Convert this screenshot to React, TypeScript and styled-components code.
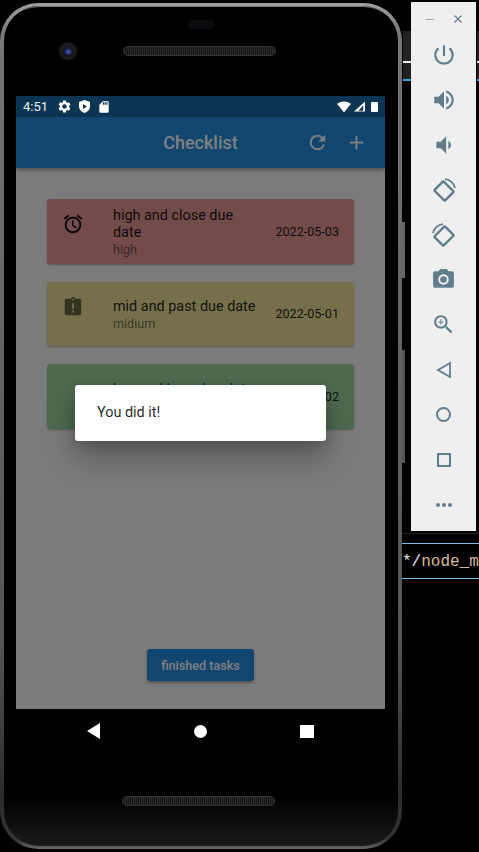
import React from "react";
import styled, { createGlobalStyle } from "styled-components";
import {
  MdAccessAlarm,
  MdAdd,
  MdAssignmentLate,
  MdMoreHoriz,
  MdPhotoCamera,
  MdPowerSettingsNew,
  MdRefresh,
  MdSdCard,
  MdSettings,
  MdVolumeDown,
  MdVolumeUp,
  MdZoomIn,
} from "react-icons/md";

const RotateIcon: React.FC<{ flip?: boolean }> = ({ flip }) => (
  <svg width="26" height="26" viewBox="0 0 26 26" fill="none" stroke="#607d8b">
    <g transform={flip ? "translate(26 0) scale(-1 1)" : undefined}>
      <rect
        x="6.5"
        y="6.5"
        width="13"
        height="15"
        rx="1"
        strokeWidth="2.4"
        transform="rotate(-45 13 14)"
      />
      <path d="M14 2.2 A11 11 0 0 1 24 11" strokeWidth="1.8" />
    </g>
  </svg>
);

const App: React.FC = () => {
  return (
    <>
      <GlobalStyle />
      <Desktop>
        <Phone>
          <PhoneInner>
            <TopBezel>
              <SensorPill />
              <EarRow>
                <Camera />
                <Speaker />
              </EarRow>
            </TopBezel>
            <Screen>
              <StatusBar>
                <StatusGroup>
                  <Clock>4:51</Clock>
                  <MdSettings size={15} color="#fff" />
                  <ShieldIcon />
                  <MdSdCard size={14} color="#fff" />
                </StatusGroup>
                <StatusGroup $tight>
                  <svg width="14" height="12" viewBox="0 0 15 12">
                    <path d="M0 2.5 Q7.5 -2.5 15 2.5 L7.5 12 Z" fill="#fff" />
                  </svg>
                  <svg width="11" height="11" viewBox="0 0 12 11">
                    <path d="M12 0 V11 H0 Z" fill="#fff" />
                    <path d="M10 4 V10 H5 Z" fill="#0c3553" />
                  </svg>
                  <Battery />
                </StatusGroup>
              </StatusBar>
              <AppSurface>
                <AppBar>
                  <AppTitle>Checklist</AppTitle>
                  <AppActions>
                    <MdRefresh size={23} color="#fff" />
                    <MdAdd size={23} color="#fff" />
                  </AppActions>
                </AppBar>
                <Body>
                  <TaskList>
                    <TaskCard $tone="#e69696">
                      <TaskIcon>
                        <MdAccessAlarm size={22} />
                      </TaskIcon>
                      <TaskText>
                        <TaskTitle>high and close due date</TaskTitle>
                        <TaskPriority>high</TaskPriority>
                      </TaskText>
                      <TaskDate>2022-05-03</TaskDate>
                    </TaskCard>
                    <TaskCard $tone="#eae096">
                      <TaskIcon $muted>
                        <MdAssignmentLate size={22} />
                      </TaskIcon>
                      <TaskText>
                        <TaskTitle>mid and past due date</TaskTitle>
                        <TaskPriority>midium</TaskPriority>
                      </TaskText>
                      <TaskDate>2022-05-01</TaskDate>
                    </TaskCard>
                    <TaskCard $tone="#9ed4a0">
                      <TaskIcon />
                      <TaskText>
                        <TaskTitle>low and long due date</TaskTitle>
                        <TaskPriority />
                      </TaskText>
                      <TaskDate>2022-05-02</TaskDate>
                    </TaskCard>
                  </TaskList>
                  <FinishedButton>finished tasks</FinishedButton>
                </Body>
                <Barrier>
                  <Dialog>You did it!</Dialog>
                </Barrier>
              </AppSurface>
            </Screen>
            <NavBar>
              <svg width="13" height="16" viewBox="0 0 13 16">
                <path d="M13 0 V16 L0 8 Z" fill="#fff" />
              </svg>
              <NavDot />
              <NavSquare />
            </NavBar>
            <BottomBezel>
              <Speaker />
            </BottomBezel>
          </PhoneInner>
          <PowerKey />
          <VolumeKey />
        </Phone>
        <SideColumn>
          <WindowScrap />
          <WindowScrap $right />
          <ToolPanel>
            <WindowControls>
              <WindowMinus />
              <svg width="8" height="8" viewBox="0 0 8 8" stroke="#607d8b" strokeWidth="1.2">
                <path d="M0.5 0.5 L7.5 7.5 M7.5 0.5 L0.5 7.5" />
              </svg>
            </WindowControls>
            <ToolButton>
              <MdPowerSettingsNew size={26} />
            </ToolButton>
            <ToolButton>
              <MdVolumeUp size={26} />
            </ToolButton>
            <ToolButton>
              <MdVolumeDown size={26} />
            </ToolButton>
            <ToolButton>
              <RotateIcon />
            </ToolButton>
            <ToolButton>
              <RotateIcon flip />
            </ToolButton>
            <ToolButton>
              <MdPhotoCamera size={25} />
            </ToolButton>
            <ToolButton>
              <MdZoomIn size={25} />
            </ToolButton>
            <ToolButton>
              <svg width="16" height="18" viewBox="0 0 16 18" fill="none">
                <path d="M14 2 V16 L2 9 Z" stroke="#607d8b" strokeWidth="1.8" />
              </svg>
            </ToolButton>
            <ToolButton>
              <ToolCircle />
            </ToolButton>
            <ToolButton>
              <ToolSquare />
            </ToolButton>
            <ToolButton>
              <MdMoreHoriz size={24} />
            </ToolButton>
          </ToolPanel>
          <TerminalRule />
          <TerminalLine>
            <TerminalText>
              <b>*/</b>node_m
            </TerminalText>
          </TerminalLine>
        </SideColumn>
      </Desktop>
    </>
  );
};

const ShieldIcon: React.FC = () => (
  <svg width="11" height="13" viewBox="0 0 11 13">
    <path
      d="M5.5 0 L11 2 V6.5 C11 9.5 8.5 12 5.5 13 C2.5 12 0 9.5 0 6.5 V2 Z"
      fill="#fff"
    />
    <path d="M4 4 L8 6.5 L4 9 Z" fill="#0c3553" />
  </svg>
);

const GlobalStyle = createGlobalStyle`
  html, body {
    margin: 0;
    background: #000;
  }
  body {
    font-family: Roboto, "Liberation Sans", sans-serif;
  }
`;

const Desktop = styled.div`
  display: flex;
  width: 479px;
  height: 852px;
  overflow: hidden;
  background: #000;
`;

const Phone = styled.div`
  position: relative;
  box-sizing: border-box;
  flex: none;
  width: 402px;
  height: 846px;
  margin-top: 3px;
  padding: 3px 4px;
  border-radius: 38px;
  background: linear-gradient(
    180deg,
    #a0a0a0 0,
    #777 30px,
    #666 300px,
    #555 640px,
    #2c2c2c 790px,
    #333 836px,
    #666 846px
  );
`;

const PhoneInner = styled.div`
  display: flex;
  flex-direction: column;
  height: 100%;
  padding: 0 13px 0 12px;
  box-sizing: border-box;
  border-radius: 35px;
  background: linear-gradient(180deg, #000 0, #000 790px, #1a1a1a 840px);
  box-shadow: inset 0 6px 0 -5px #777;
`;

const TopBezel = styled.div`
  flex: none;
  height: 90px;
  box-sizing: border-box;
  padding-top: 14px;
`;

const SensorPill = styled.div`
  width: 26px;
  height: 9px;
  margin: 0 auto;
  border-radius: 5px;
  background: #0c0c10;
`;

const EarRow = styled.div`
  display: flex;
  align-items: center;
  margin-top: 13px;
`;

const Camera = styled.div`
  width: 8px;
  height: 8px;
  margin-left: 43px;
  border: 5px solid #1a1a1e;
  border-radius: 50%;
  background: radial-gradient(circle at 55% 60%, #5560c0 0, #1a2050 50%, #080a20 100%);
`;

const Speaker = styled.div`
  width: 153px;
  height: 10px;
  box-sizing: border-box;
  margin-left: 46px;
  border: 1px solid #333;
  border-radius: 5px;
  background: repeating-linear-gradient(90deg, #2a2a2a 0 1px, #141414 1px 2px);
`;

const Screen = styled.div`
  flex: none;
  display: flex;
  flex-direction: column;
  height: 613px;
`;

const StatusBar = styled.div`
  flex: none;
  display: flex;
  align-items: center;
  justify-content: space-between;
  height: 21px;
  padding: 0 7px;
  background: #0c3553;
`;

const StatusGroup = styled.div<{ $tight?: boolean }>`
  display: flex;
  align-items: center;
  gap: ${(p) => (p.$tight ? 3 : 7)}px;
`;

const Clock = styled.span`
  margin-right: 2px;
  color: #e8eef2;
  font-size: 13px;
`;

const Battery = styled.div`
  width: 7px;
  height: 10px;
  margin-left: 3px;
  border-radius: 1px;
  background: #fff;
`;

const AppSurface = styled.div`
  position: relative;
  flex: 1;
  display: flex;
  flex-direction: column;
  min-height: 0;
`;

const AppBar = styled.header`
  position: relative;
  z-index: 1;
  flex: none;
  display: flex;
  align-items: center;
  justify-content: center;
  height: 51px;
  background: #208ddf;
  box-shadow: 0 2px 4px rgba(0, 0, 0, 0.35);
`;

const AppTitle = styled.h1`
  margin: 0;
  color: #fff;
  font-size: 18px;
  font-weight: 500;
`;

const AppActions = styled.div`
  position: absolute;
  top: 14px;
  right: 17px;
  display: flex;
  gap: 16px;
`;

const Body = styled.main`
  flex: 1;
  display: flex;
  flex-direction: column;
  align-items: center;
  background: #f7f7f7;
`;

const TaskList = styled.div`
  flex: 1;
  display: flex;
  flex-direction: column;
  gap: 18px;
  align-self: stretch;
  padding: 31px 31px 0;
`;

const TaskCard = styled.article<{ $tone: string }>`
  display: flex;
  align-items: center;
  box-sizing: border-box;
  height: 64.5px;
  padding: 0 15px;
  border-radius: 3px;
  background: ${(p) => p.$tone};
  box-shadow: 0 1px 2px rgba(0, 0, 0, 0.3);
`;

const TaskIcon = styled.div<{ $muted?: boolean }>`
  flex: none;
  align-self: flex-start;
  width: 22px;
  height: 22px;
  margin-top: 14px;
  color: #000;
  opacity: ${(p) => (p.$muted ? 0.55 : 1)};
`;

const TaskText = styled.div`
  width: 146px;
  margin-left: 29px;
  padding-top: 2px;
`;

const TaskTitle = styled.div`
  color: rgba(0, 0, 0, 0.87);
  font-size: 14.4px;
  line-height: 17px;
`;

const TaskPriority = styled.div`
  min-height: 15px;
  margin-top: 1px;
  color: rgba(0, 0, 0, 0.54);
  font-size: 12.6px;
  line-height: 15px;
`;

const TaskDate = styled.div`
  margin-left: auto;
  color: rgba(0, 0, 0, 0.87);
  font-size: 12.6px;
`;

const FinishedButton = styled.button`
  flex: none;
  width: 107px;
  height: 32px;
  margin-bottom: 28px;
  padding: 0;
  border: 0;
  border-radius: 3px;
  background: #208ddf;
  box-shadow: 0 2px 3px rgba(0, 0, 0, 0.3);
  color: #fff;
  font-family: inherit;
  font-size: 12.6px;
  font-weight: 500;
`;

const Barrier = styled.div`
  position: absolute;
  inset: 0;
  z-index: 2;
  display: flex;
  align-items: center;
  justify-content: center;
  background: rgba(0, 0, 0, 0.5);
`;

const Dialog = styled.div`
  box-sizing: border-box;
  width: 251px;
  height: 56px;
  padding: 19px 22px 0;
  border-radius: 3px;
  background: #fff;
  box-shadow: 0 16px 30px rgba(0, 0, 0, 0.28), 0 4px 12px rgba(0, 0, 0, 0.16);
  color: rgba(0, 0, 0, 0.87);
  font-size: 14.4px;
  line-height: 17px;
`;

const NavBar = styled.nav`
  flex: none;
  display: flex;
  align-items: center;
  justify-content: space-between;
  height: 44px;
  padding: 0 71px;
`;

const NavDot = styled.div`
  width: 13px;
  height: 13px;
  border-radius: 50%;
  background: #fff;
`;

const NavSquare = styled.div`
  width: 14px;
  height: 13px;
  background: #fff;
`;

const BottomBezel = styled.div`
  flex: 1;
  padding-top: 43px;
  ${Speaker} {
    margin-left: 106px;
  }
`;

const PowerKey = styled.div`
  position: absolute;
  top: 219px;
  right: -3px;
  width: 3px;
  height: 56px;
  background: #666;
`;

const VolumeKey = styled.div`
  position: absolute;
  top: 347px;
  right: -3px;
  width: 3px;
  height: 113px;
  background: #555;
`;

const SideColumn = styled.div`
  position: relative;
  flex: none;
  width: 77px;
  display: flex;
  flex-direction: column;
`;

const WindowScrap = styled.div<{ $right?: boolean }>`
  position: absolute;
  top: 31px;
  left: ${(p) => (p.$right ? 75 : 1)}px;
  width: ${(p) => (p.$right ? 2 : 8)}px;
  height: 50px;
  box-sizing: border-box;
  border-bottom: 2px solid #29a8e8;
  background: linear-gradient(180deg, #222 0 30px, #eee 30px 32px, #222 32px);
`;

const ToolPanel = styled.aside`
  display: flex;
  flex-direction: column;
  align-items: center;
  box-sizing: border-box;
  width: 65px;
  height: 529px;
  margin: 2px 0 0 9px;
  background: #efefef;
  color: #607d8b;
`;

const WindowControls = styled.div`
  display: flex;
  align-items: center;
  justify-content: space-between;
  box-sizing: border-box;
  width: 36px;
  height: 30px;
  padding-top: 4px;
`;

const WindowMinus = styled.div`
  width: 8px;
  height: 1px;
  background: #90a4ae;
`;

const ToolButton = styled.div`
  display: flex;
  align-items: center;
  justify-content: center;
  flex: none;
  height: 45px;
`;

const ToolCircle = styled.div`
  width: 11px;
  height: 11px;
  border: 2px solid #607d8b;
  border-radius: 50%;
`;

const ToolSquare = styled.div`
  width: 10px;
  height: 10px;
  border: 2px solid #607d8b;
  border-radius: 1px;
`;

const TerminalRule = styled.div`
  height: 1px;
  margin-top: 2px;
  background: #242424;
`;

const TerminalLine = styled.div`
  height: 34px;
  margin-top: 9px;
  border-top: 1px solid #6fc3e6;
  border-bottom: 1px solid #6fc3e6;
  background: #000;
`;

const TerminalText = styled.div`
  padding-top: 3px;
  color: #d7ba9a;
  font-family: "Liberation Mono", monospace;
  font-size: 16px;
  line-height: 30px;
  white-space: nowrap;
  b {
    color: #e8e8e8;
    font-weight: 400;
  }
`;

export default App;
